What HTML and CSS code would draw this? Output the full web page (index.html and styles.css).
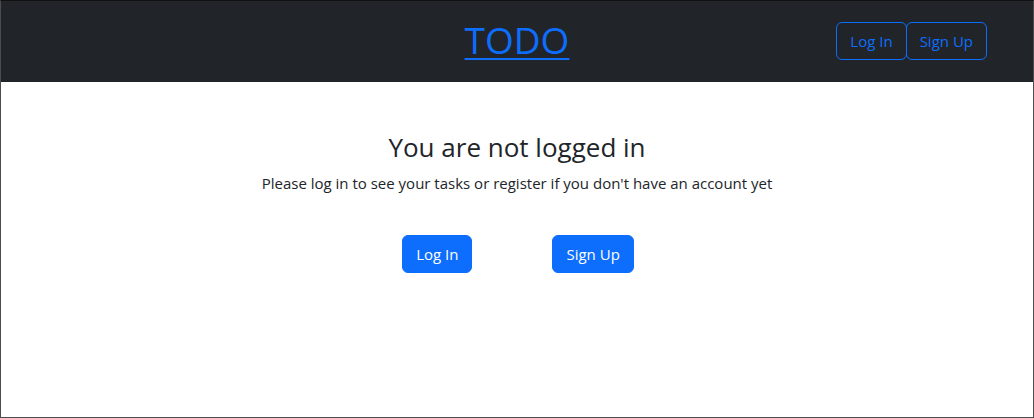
FILE: index.html
```html
<!DOCTYPE html>
<html lang="en">
<head>
<meta charset="utf-8">
<title>TODO</title>
<link rel="stylesheet" href="styles.css">
</head>
<body>
<div class="frame">
  <header class="navbar">
    <div class="nav-side"></div>
    <a class="brand" href="#">TODO</a>
    <div class="nav-side nav-actions">
      <a class="btn btn-outline" href="#">Log In</a>
      <a class="btn btn-outline" href="#">Sign Up</a>
    </div>
  </header>
  <main class="content">
    <h3 class="title">You are not logged in</h3>
    <p class="lead-text">Please log in to see your tasks or register if you don't have an account yet</p>
    <div class="actions">
      <a class="btn btn-primary" href="#">Log In</a>
      <a class="btn btn-primary" href="#">Sign Up</a>
    </div>
  </main>
</div>
</body>
</html>
```
FILE: styles.css
```css
* { box-sizing: border-box; }
html, body { margin: 0; padding: 0; }
body {
  font-family: "Open Sans", "Noto Sans", sans-serif;
  color: #212529;
  background: #fff;
}
.frame {
  width: 1034px;
  height: 418px;
  border: 1px solid #4d4d4d;
  border-top-color: #111;
  display: flex;
  flex-direction: column;
}
.navbar {
  background: #212529;
  height: 81px;
  display: grid;
  grid-template-columns: 1fr auto 1fr;
  align-items: center;
}
.brand {
  color: #0d6efd;
  font-size: 37px;
  line-height: 1.2;
  padding-bottom: 3px;
  text-decoration: underline;
  text-decoration-thickness: 2px;
  text-underline-offset: 4px;
}
.nav-actions {
  display: flex;
  justify-content: flex-end;
  padding-right: 46px;
  padding-bottom: 1px;
}
.btn {
  display: inline-block;
  font-size: 15px;
  line-height: 24px;
  padding: 6px 13px;
  border-radius: 6px;
  border: 1px solid transparent;
  text-decoration: none;
}
.btn-outline {
  color: #0d6efd;
  border-color: #0d6efd;
}
.btn-outline + .btn-outline { margin-left: -1px; }
.btn-primary {
  background: #0d6efd;
  border-color: #0d6efd;
  color: #fff;
}
.content {
  display: flex;
  flex-direction: column;
  align-items: center;
  padding-top: 50px;
}
.title {
  margin: 0;
  font-size: 26px;
  font-weight: 400;
  line-height: 1.2;
}
.lead-text {
  margin: 8px 0 0;
  font-size: 15px;
  line-height: 24px;
}
.actions {
  display: flex;
  gap: 80px;
  margin-top: 40px;
  padding-left: 2px;
}
```
